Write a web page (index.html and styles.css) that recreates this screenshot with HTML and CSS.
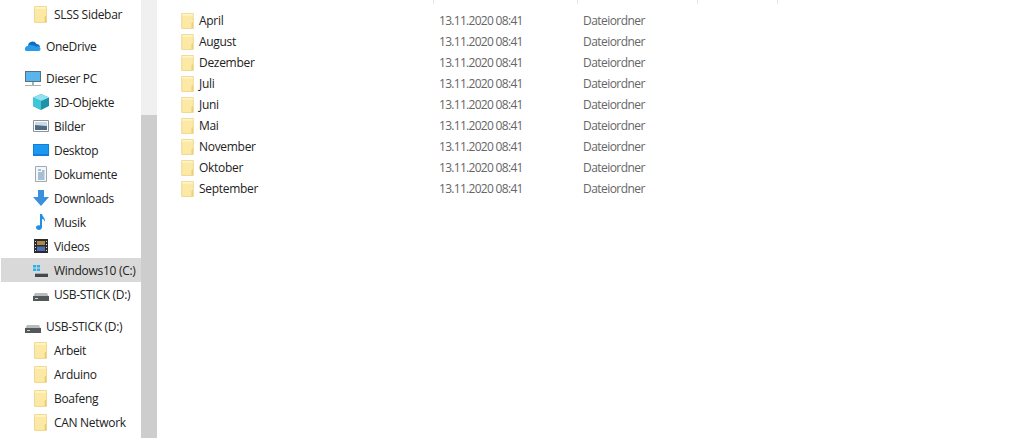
FILE: index.html
```html
<!DOCTYPE html>
<html lang="de">
<head>
    <meta charset="UTF-8">
    <title>Explorer</title>
    <link rel="stylesheet" href="styles.css">
</head>
<body>
    <svg class="defs" width="0" height="0">
        <symbol id="folder" viewBox="0 0 14 18">
            <path d="M.5 .5H13.500V17.500H.5Z" fill="#fde9a6" stroke="#ecd588"/>
            <path d="M1 1H13V3H1Z" fill="#fff3c8"/>
            <path d="M11.500 17V11.500L13 10V17Z" fill="#eccb6c"/>
        </symbol>
        <symbol id="drive" viewBox="0 0 16 8">
            <path d="M2 0H14L16 4H0Z" fill="#b9bcbf"/>
            <path d="M0 3H16V8H0Z" fill="#55585b"/>
            <path d="M2 5H5V6H2Z" fill="#b5e6b8"/>
        </symbol>
    </svg>

    <nav class="sidebar">
        <div class="group">
            <div class="row sub"><svg class="ic-folder"><use href="#folder"/></svg><span>SLSS Sidebar</span></div>
        </div>
        <div class="group">
            <div class="row">
                <svg class="ic" viewBox="0 0 16 16"><path d="M3 8a4.500 4.500 0 0 1 8.500-2A3.500 3.500 0 0 1 15 9L7 12Z" fill="#0f6cc4"/><path d="M1 13a2.800 2.800 0 0 1 1.500-5 3 3 0 0 1 4.500-.5A3.500 3.500 0 0 1 11 9a3 3 0 0 1 4 .5A2.200 2.200 0 0 1 14 13Z" fill="#2a9be8"/></svg>
                <span>OneDrive</span>
            </div>
        </div>
        <div class="group">
            <div class="row">
                <svg class="ic" viewBox="0 0 16 16"><path d="M0 1H16V12H0Z" fill="#5d6f7c"/><path d="M1 2H15V11H1Z" fill="#58b5ee"/><path d="M7 12H9V15H7ZM0 15H16V16H0Z" fill="#a8b0b6"/></svg>
                <span>Dieser PC</span>
            </div>
            <div class="row sub">
                <svg class="ic" viewBox="0 0 16 16"><path d="M8 0L16 3.500V12L8 16L0 12V3.500Z" fill="#1f93a6"/><path d="M8 0L16 3.500L8 7L0 3.500Z" fill="#8fe3ee"/><path d="M0 3.500L8 7V16L0 12Z" fill="#3fc6da"/></svg>
                <span>3D-Objekte</span>
            </div>
            <div class="row sub">
                <svg class="ic" viewBox="0 0 16 16"><path d="M.5 2.500H15.500V13.500H.5Z" fill="#fff" stroke="#8a949b"/><path d="M2 4H14V8L2 7Z" fill="#c9dbea"/><path d="M2 7L14 8V12H2Z" fill="#4f6b82"/></svg>
                <span>Bilder</span>
            </div>
            <div class="row sub">
                <svg class="ic" viewBox="0 0 16 16"><path d="M0 2H16V14H0Z" fill="#0d7fdc"/><path d="M1 3H15V12H1Z" fill="#1c98ee"/></svg>
                <span>Desktop</span>
            </div>
            <div class="row sub">
                <svg class="ic" viewBox="0 0 16 16"><path d="M2.500 .5H13.500V15.500H2.500Z" fill="#f4f7fa" stroke="#a0aab2"/><path d="M5 4H8M9 5H11.500M5 7H11.500M5 9H11.500M5 11H11.500M5 13H11.500" stroke="#5d87a8"/></svg>
                <span>Dokumente</span>
            </div>
            <div class="row sub">
                <svg class="ic" viewBox="0 0 16 16"><path d="M5 0H11V7H16L8 16L0 7H5Z" fill="#3b8fdc"/></svg>
                <span>Downloads</span>
            </div>
            <div class="row sub">
                <svg class="ic" viewBox="0 0 16 16"><path d="M7 0H9C9.500 3 12.500 4 12 8C11 5.500 10 5 9 5V13C9 15 7.500 16 6 16C4.500 16 3 15 3 13.500C3 12 5 11 7 11.500Z" fill="#1e90e6"/></svg>
                <span>Musik</span>
            </div>
            <div class="row sub">
                <svg class="ic" viewBox="0 0 16 16"><path d="M1 1H15V15H1Z" fill="#2b2b2b"/><path d="M4 3H12V7H4Z" fill="#a98a4b"/><path d="M4 8.500H12V13H4Z" fill="#4f6fb5"/><path d="M2 3H3V4H2ZM2 6H3V7H2ZM2 9H3V10H2ZM2 12H3V13H2ZM13 3H14V4H13ZM13 6H14V7H13ZM13 9H14V10H13ZM13 12H14V13H13Z" fill="#ddd"/></svg>
                <span>Videos</span>
            </div>
            <div class="row sub selected">
                <svg class="ic" viewBox="0 0 16 16"><path d="M0 3H3V5.500H0ZM3.800 3H7V5.500H3.800ZM0 6.500H3V9H0ZM3.800 6.500H7V9H3.800Z" fill="#28b0e8"/><path d="M2 12H15V15H2Z" fill="#45484b"/><path d="M2 11H15V12H2Z" fill="#a9adb0"/></svg>
                <span>Windows10 (C:)</span>
            </div>
            <div class="row sub">
                <svg class="ic-drive"><use href="#drive"/></svg>
                <span>USB-STICK (D:)</span>
            </div>
        </div>
        <div class="group">
            <div class="row">
                <svg class="ic-drive"><use href="#drive"/></svg>
                <span>USB-STICK (D:)</span>
            </div>
            <div class="row sub"><svg class="ic-folder"><use href="#folder"/></svg><span>Arbeit</span></div>
            <div class="row sub"><svg class="ic-folder"><use href="#folder"/></svg><span>Arduino</span></div>
            <div class="row sub"><svg class="ic-folder"><use href="#folder"/></svg><span>Boafeng</span></div>
            <div class="row sub"><svg class="ic-folder"><use href="#folder"/></svg><span>CAN Network</span></div>
        </div>
    </nav>

    <div class="scrollbar"><div class="thumb"></div></div>

    <main class="content">
        <div class="head">
            <div class="col col-name"></div>
            <div class="col col-date"></div>
            <div class="col col-type"></div>
            <div class="col col-size"></div>
        </div>
        <div class="file"><svg class="ic-file"><use href="#folder"/></svg><span class="name">April</span><span class="date">13.11.2020 08:41</span><span class="type">Dateiordner</span></div>
        <div class="file"><svg class="ic-file"><use href="#folder"/></svg><span class="name">August</span><span class="date">13.11.2020 08:41</span><span class="type">Dateiordner</span></div>
        <div class="file"><svg class="ic-file"><use href="#folder"/></svg><span class="name">Dezember</span><span class="date">13.11.2020 08:41</span><span class="type">Dateiordner</span></div>
        <div class="file"><svg class="ic-file"><use href="#folder"/></svg><span class="name">Juli</span><span class="date">13.11.2020 08:41</span><span class="type">Dateiordner</span></div>
        <div class="file"><svg class="ic-file"><use href="#folder"/></svg><span class="name">Juni</span><span class="date">13.11.2020 08:41</span><span class="type">Dateiordner</span></div>
        <div class="file"><svg class="ic-file"><use href="#folder"/></svg><span class="name">Mai</span><span class="date">13.11.2020 08:41</span><span class="type">Dateiordner</span></div>
        <div class="file"><svg class="ic-file"><use href="#folder"/></svg><span class="name">November</span><span class="date">13.11.2020 08:41</span><span class="type">Dateiordner</span></div>
        <div class="file"><svg class="ic-file"><use href="#folder"/></svg><span class="name">Oktober</span><span class="date">13.11.2020 08:41</span><span class="type">Dateiordner</span></div>
        <div class="file"><svg class="ic-file"><use href="#folder"/></svg><span class="name">September</span><span class="date">13.11.2020 08:41</span><span class="type">Dateiordner</span></div>
    </main>
</body>
</html>
```

FILE: styles.css
```css
html, body {
    height: 100%;
}

body {
    margin: 0;
    display: flex;
    height: 438px;
    overflow: hidden;
    background: #fff;
    color: #222;
    font-family: "Open Sans", sans-serif;
    font-size: 12px;
    letter-spacing: -0.3px;
}

.defs {
    position: absolute;
}

.sidebar {
    width: 140px;
    margin-left: 1px;
    padding-top: 2px;
    overflow: hidden;
    flex-shrink: 0;
}

.group {
    margin-bottom: 8px;
}

.row {
    display: flex;
    align-items: center;
    height: 24px;
    padding-left: 24px;
    white-space: nowrap;
}

.row span {
    margin-left: 5px;
}

.row.sub {
    padding-left: 32px;
}

.row.selected {
    background: #d9d9d9;
}

.ic {
    width: 16px;
    height: 16px;
    flex-shrink: 0;
}

.ic-folder {
    width: 13px;
    height: 17px;
    margin: 0 2px 0 1px;
    flex-shrink: 0;
}

.ic-drive {
    width: 16px;
    height: 8px;
    margin-top: 5px;
    flex-shrink: 0;
}

.scrollbar {
    width: 16px;
    flex-shrink: 0;
    padding-top: 115px;
    background: #f0f0f0;
}

.thumb {
    height: 100%;
    background: #cdcdcd;
}

.content {
    flex: 1;
    padding-left: 24px;
}

.head {
    display: flex;
    height: 4px;
    margin-bottom: 6px;
}

.col {
    border-right: 1px solid #e5e5e5;
    box-sizing: border-box;
}

.col-name {
    width: 253px;
}

.col-date {
    width: 144px;
}

.col-type {
    width: 120px;
}

.col-size {
    width: 80px;
}

.file {
    display: flex;
    align-items: center;
    height: 21px;
}

.ic-file {
    width: 13px;
    height: 16px;
    flex-shrink: 0;
}

.name {
    width: 240px;
    margin-left: 5px;
}

.date {
    width: 144px;
    color: #666;
    letter-spacing: -0.7px;
}

.type {
    color: #666;
    letter-spacing: -0.55px;
}
```
